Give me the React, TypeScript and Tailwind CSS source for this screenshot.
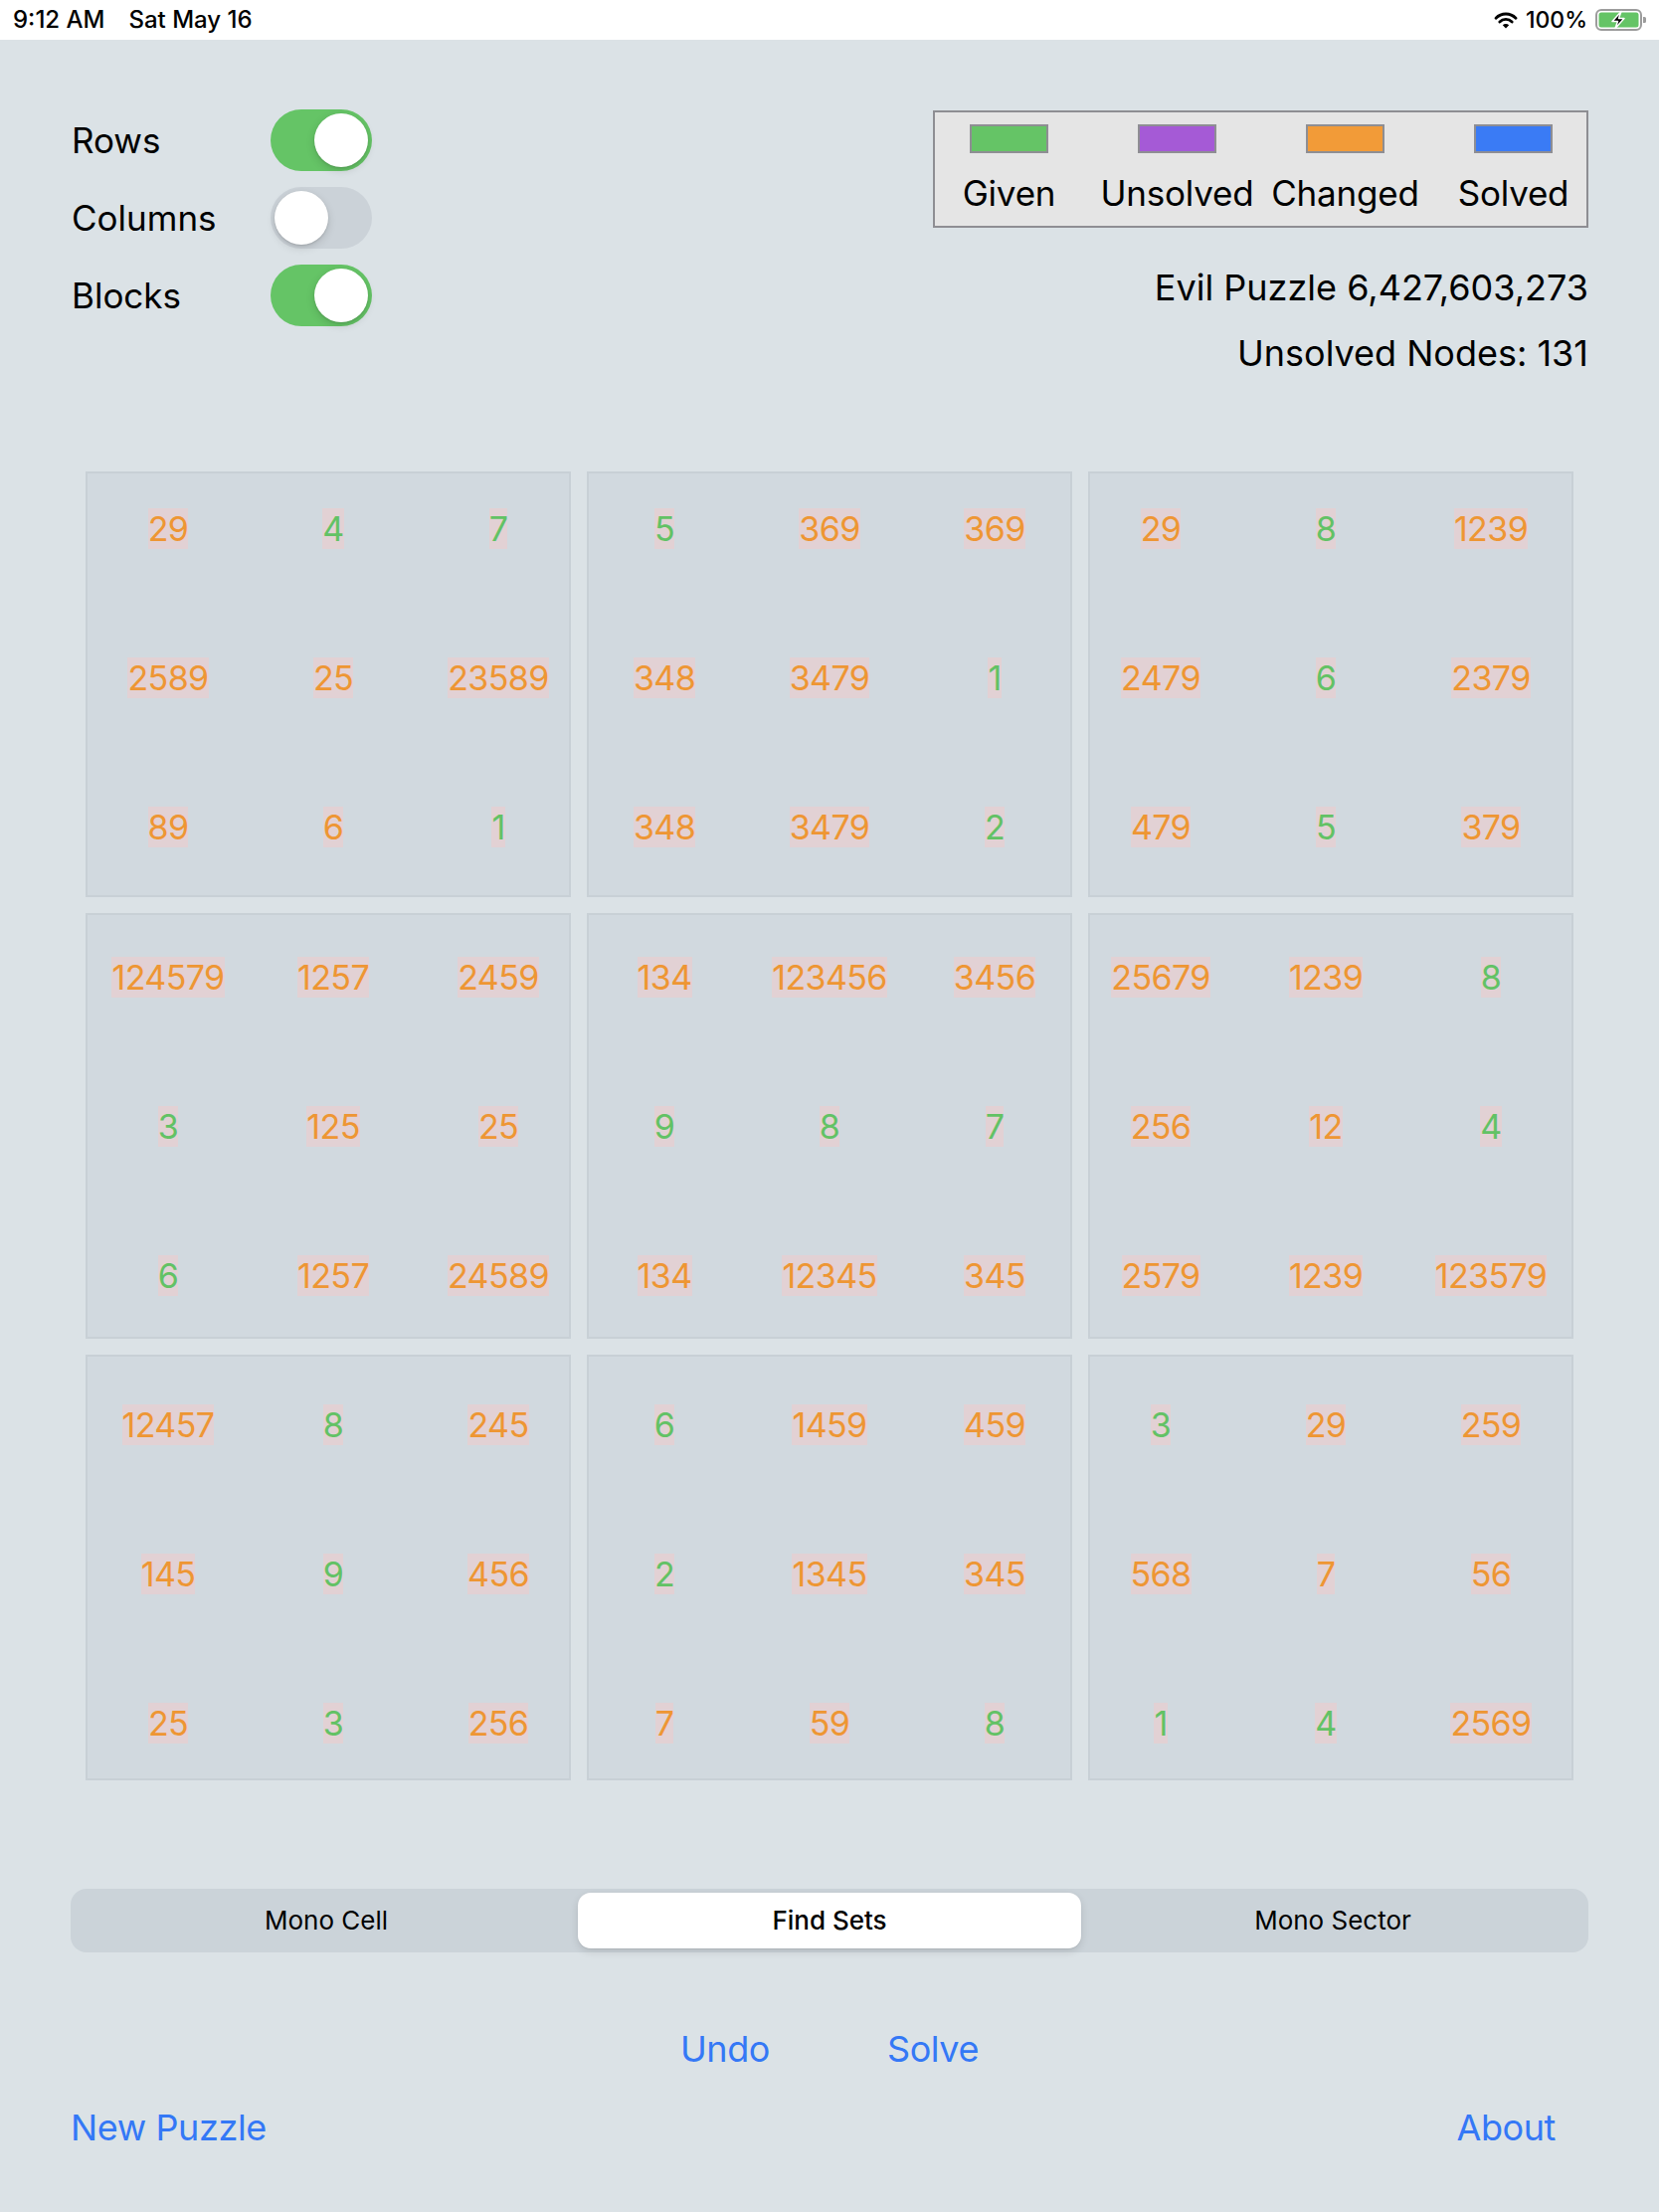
import React from "react";

const BLOCKS: string[][] = [
  ["29", "4*", "7*", "2589", "25", "23589", "89", "6", "1*"],
  ["5*", "369", "369", "348", "3479", "1*", "348", "3479", "2*"],
  ["29", "8*", "1239", "2479", "6*", "2379", "479", "5*", "379"],
  ["124579", "1257", "2459", "3*", "125", "25", "6*", "1257", "24589"],
  ["134", "123456", "3456", "9*", "8*", "7*", "134", "12345", "345"],
  ["25679", "1239", "8*", "256", "12", "4*", "2579", "1239", "123579"],
  ["12457", "8*", "245", "145", "9*", "456", "25", "3*", "256"],
  ["6*", "1459", "459", "2*", "1345", "345", "7", "59", "8*"],
  ["3*", "29", "259", "568", "7", "56", "1*", "4*", "2569"],
];

const COL_OFF = ["ml-[-2px]", "ml-[-7px]", "ml-[-12px]"];
const ROW_OFF = ["mt-[-20px]", "mt-[-13px]", "mt-[-7px]"];

function Toggle({ on }: { on: boolean }) {
  return (
    <div
      className={
        on
          ? "w-[102px] h-[62px] rounded-full bg-[#65c466] p-[4px] flex justify-end"
          : "w-[102px] h-[62px] rounded-full bg-[#cbd2d8] p-[4px] flex justify-start"
      }
    >
      <div className="w-[54px] h-[54px] rounded-full bg-white shadow-[0_3px_8px_rgba(0,0,0,0.15),0_1px_2px_rgba(0,0,0,0.12)]" />
    </div>
  );
}

function Wifi() {
  return (
    <svg width="24" height="18" viewBox="0 0 24 18">
      <path d="M2 7.2 A14 14 0 0 1 22 7.2" stroke="black" strokeWidth="2.8" fill="none" strokeLinecap="round" />
      <path d="M5.8 11 A8.8 8.8 0 0 1 18.2 11" stroke="black" strokeWidth="2.8" fill="none" strokeLinecap="round" />
      <path d="M8.8 14.2 A4.6 4.6 0 0 1 15.2 14.2 L12 17.6 Z" fill="black" />
    </svg>
  );
}

function Battery() {
  return (
    <svg width="54" height="22" viewBox="0 0 54 22">
      <rect x="1" y="1" width="45" height="20" rx="5" fill="none" stroke="#9c9c9c" strokeWidth="2" />
      <rect x="3.5" y="3.5" width="40" height="15" rx="2.5" fill="#65c466" />
      <path d="M48 8 h1.5 a1.5 1.5 0 0 1 1.5 1.5 v3 a1.5 1.5 0 0 1 -1.5 1.5 h-1.5 Z" fill="#9c9c9c" />
      <path
        d="M26 2.5 L17 12.5 L22.5 12.5 L20 19.5 L29 9.5 L23.5 9.5 Z"
        fill="black"
        stroke="white"
        strokeWidth="1.5"
        strokeLinejoin="round"
      />
    </svg>
  );
}

function Cell({ v }: { v: string }) {
  const given = v.endsWith("*");
  const text = given ? v.slice(0, -1) : v;
  return (
    <div className="flex items-center justify-center">
      <span
        className={
          given
            ? "bg-[#e2d1d4] text-[#62c265] text-[34px] leading-[41px] tracking-[-0.6px]"
            : "bg-[#e2d1d4] text-[#ee9633] text-[34px] leading-[41px] tracking-[-0.6px]"
        }
      >
        {text}
      </span>
    </div>
  );
}

function Block({ idx }: { idx: number }) {
  const r = Math.floor(idx / 3);
  const c = idx % 3;
  return (
    <div className="w-[488px] h-[428px] bg-[#d1d9df] border-2 border-[#c8d0d6]">
      <div
        className={
          "grid grid-cols-[repeat(3,166px)] grid-rows-[repeat(3,150.25px)] " + COL_OFF[c] + " " + ROW_OFF[r]
        }
      >
        {BLOCKS[idx].map((v, i) => (
          <Cell key={i} v={v} />
        ))}
      </div>
    </div>
  );
}

const LEGEND = [
  { label: "Given", color: "bg-[#65c466]" },
  { label: "Unsolved", color: "bg-[#a55ad6]" },
  { label: "Changed", color: "bg-[#f29b38]" },
  { label: "Solved", color: "bg-[#3a7bf5]" },
];

export default function App() {
  return (
    <div className="min-h-[2224px] w-[1668px] bg-[#dbe2e6] font-[family-name:Inter,sans-serif] text-black">
      {/* status bar */}
      <div className="h-[40px] bg-white flex items-center justify-between pl-[13px] pr-[10px]">
        <div className="flex gap-[24px] text-[24px] font-medium leading-[28px]">
          <span>9:12 AM</span>
          <span>Sat May 16</span>
        </div>
        <div className="flex items-center gap-[8px]">
          <Wifi />
          <span className="text-[23px] font-medium leading-[28px]">100%</span>
          <Battery />
        </div>
      </div>

      {/* top section */}
      <div className="flex justify-between items-start pl-[72px] pr-[71px]">
        <div className="pt-[70px] flex flex-col gap-[16px]">
          {[
            { l: "Rows", on: true },
            { l: "Columns", on: false },
            { l: "Blocks", on: true },
          ].map((t) => (
            <div key={t.l} className="flex items-center">
              <div className="w-[200px] text-[35px] leading-[42px]">{t.l}</div>
              <Toggle on={t.on} />
            </div>
          ))}
        </div>
        <div className="pt-[71px] flex flex-col items-end">
          <div className="w-[659px] h-[118px] border-2 border-[#8e8e93] bg-[#e5e5e5] pt-[12px]">
            <div className="grid grid-cols-[repeat(4,169px)] ml-[-10px]">
              {LEGEND.map((l) => (
                <div key={l.label} className="flex flex-col items-center">
                  <div className={"w-[79px] h-[29px] border-2 border-[#8e8e93] " + l.color} />
                  <div className="mt-[19px] text-[35px] leading-[42px] tracking-[-0.2px]">{l.label}</div>
                </div>
              ))}
            </div>
          </div>
          <div className="mt-[39px] text-[36px] leading-[42px]">Evil Puzzle 6,427,603,273</div>
          <div className="mt-[24px] text-[36px] leading-[42px]">Unsolved Nodes: 131</div>
        </div>
      </div>

      {/* grid */}
      <div className="mt-[98px] ml-[86px] grid grid-cols-[repeat(3,488px)] grid-rows-[repeat(3,428px)] gap-[16px]">
        {BLOCKS.map((_, i) => (
          <Block key={i} idx={i} />
        ))}
      </div>

      {/* segmented */}
      <div className="mt-[109px] mx-[71px] h-[64px] rounded-[16px] bg-[#cbd3d9] p-[4px] grid grid-cols-3 text-[26px] leading-[32px]">
        <div className="flex items-center justify-center">Mono Cell</div>
        <div className="flex items-center justify-center bg-white rounded-[13px] font-medium shadow-[0_3px_8px_rgba(0,0,0,0.12),0_1px_1px_rgba(0,0,0,0.06)]">
          Find Sets
        </div>
        <div className="flex items-center justify-center">Mono Sector</div>
      </div>

      {/* actions */}
      <div className="mt-[75px] flex justify-center gap-[118px] text-[36px] leading-[44px] text-[#3478f6] tracking-[-0.4px]">
        <span>Undo</span>
        <span>Solve</span>
      </div>
      <div className="mt-[35px] flex justify-between pl-[71px] pr-[104px] text-[36px] leading-[44px] text-[#3478f6] tracking-[-0.4px]">
        <span>New Puzzle</span>
        <span>About</span>
      </div>
    </div>
  );
}
